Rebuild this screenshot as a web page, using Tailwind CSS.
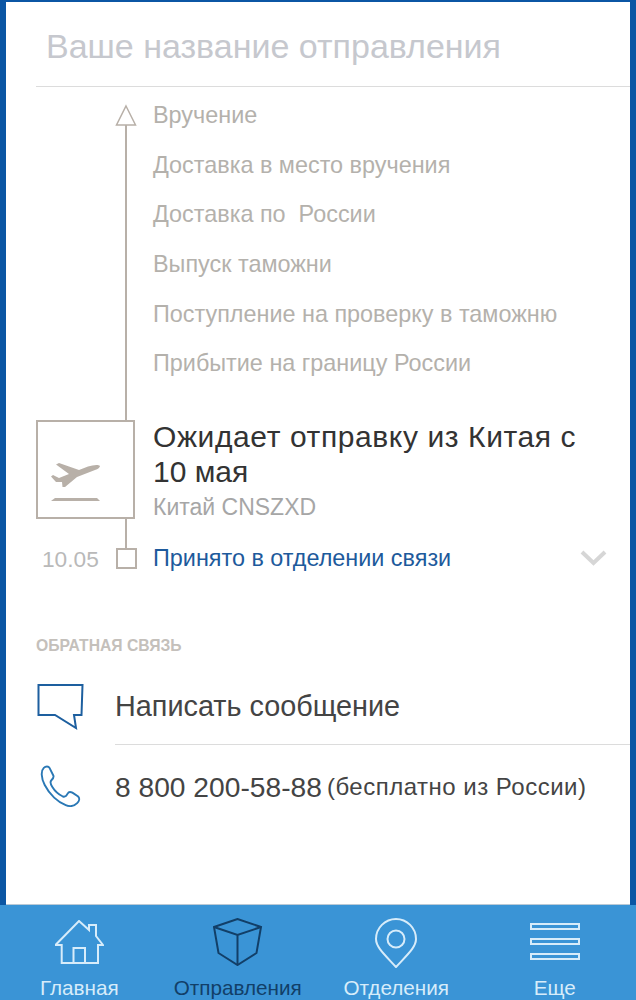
<!DOCTYPE html>
<html lang="en">
    <head>
        <meta charset="UTF-8" />
        <meta name="viewport" content="width=device-width, initial-scale=1.0" />
        <title>Отправление</title>
        <script src="https://cdn.jsdelivr.net/npm/@tailwindcss/browser@4"></script>
    </head>
    <body class="bg-white">
        <div class="w-[636px] h-[1000px] overflow-hidden flex flex-col bg-[#0b56a4] pt-[2px] font-['Liberation_Sans',sans-serif]">
            <!-- content -->
            <div class="mx-[6px] h-[903px] shrink-0 bg-white border-b border-[#b9c9d6] flex flex-col">
                <div class="ml-[30px] h-[85px] border-b border-[#dcdcdc] pl-[10px] pt-[22px] text-[34px] leading-[44px] text-[#c6c8ce]">Ваше название отправления</div>

                <!-- timeline -->
                <div class="relative ml-[30px] pt-[4px]">
                    <div class="absolute left-[89px] top-[38px] w-[2px] h-[434px] bg-[#b8b0a8]"></div>
                    <svg class="absolute left-[79px] top-[17px]" width="22" height="22" viewBox="0 0 22 22" fill="white" stroke="#b8b0a8" stroke-width="1.5"><path d="M11 2 L20.5 21 H1.5 Z" /></svg>

                    <ul class="pl-[117px] text-[23.4px] text-[#b4b1ac]">
                        <li class="h-[49.6px] flex items-center">Вручение</li>
                        <li class="h-[49.6px] flex items-center">Доставка в место вручения</li>
                        <li class="h-[49.6px] flex items-center whitespace-pre">Доставка по  России</li>
                        <li class="h-[49.6px] flex items-center">Выпуск таможни</li>
                        <li class="h-[49.6px] flex items-center">Поступление на проверку в таможню</li>
                        <li class="h-[49.6px] flex items-center">Прибытие на границу России</li>
                    </ul>

                    <!-- current step -->
                    <div class="relative flex h-[99px] mt-[31px]">
                        <div class="w-[99px] h-[99px] shrink-0 border-2 border-[#b8b0a8] bg-white pl-[13px] pt-[40px]">
                            <svg width="50" height="40" viewBox="0 0 50 40" fill="#b8b0a8">
                                <path d="M49 4 C47 2 42 3 37 4.5 L28 8 L8 1 L5 2.5 L18 12 L8 16 L2 13 L0 14.500 L5 20 L11 20 L11.500 25 L14 25 L26 15 L44 8 C47 7 49 5.500 49 4 Z" />
                                <path d="M4 36 H46 L49 39 H0 Z" />
                            </svg>
                        </div>
                        <div class="ml-[18px] w-[450px] -mt-[1px]">
                            <div class="text-[30px] leading-[35px] text-[#333333]">
                                <div class="tracking-[0.6px]">Ожидает отправку из Китая с</div>
                                <div>10 мая</div>
                            </div>
                            <div class="mt-[4px] text-[23px] leading-[28px] text-[#a6a6a6]">Китай CNSZXD</div>
                        </div>
                    </div>

                    <div class="relative flex items-center h-[40px] mt-[20px]">
                        <span class="w-[64px] pl-[6px] text-[22.7px] text-[#b9b9b9] shrink-0 whitespace-nowrap">10.05</span>
                        <span class="ml-[16px] w-[21px] h-[21px] border-[2.5px] border-[#b8b0a8] bg-white shrink-0"></span>
                        <span class="ml-[16px] text-[23.4px] text-[#1d5a9c]">Принято в отделении связи</span>
                        <svg class="absolute left-[544px] top-[10px]" width="27" height="17" viewBox="0 0 27 17" fill="none" stroke="#d6d6d6" stroke-width="4"><path d="M2 3 L13.500 14 L25 3" /></svg>
                    </div>
                </div>

                <!-- feedback -->
                <div class="ml-[30px] mt-[58px] text-[15.7px] leading-[18px] font-bold text-[#c4c0bb]">ОБРАТНАЯ СВЯЗЬ</div>
                <div class="ml-[30px] mt-[15px] flex">
                    <div class="w-[79px] shrink-0 pt-[14px]">
                        <svg width="48" height="46" viewBox="0 0 48 46" fill="none" stroke="#1d5f9f" stroke-width="2"><path d="M2.500 1 H46.500 L45.500 31 H38 L40 44 L19 31 H2.500 Z" /></svg>
                    </div>
                    <div class="flex-1 h-[75px] border-b border-[#dcdcdc] flex items-center text-[28.8px] text-[#444444]">Написать сообщение</div>
                </div>
                <div class="ml-[30px] flex">
                    <div class="w-[79px] shrink-0 pt-[20px] pl-[3px]">
                        <svg width="42" height="42" viewBox="0 0 44 44" fill="none" stroke="#2a78b5" stroke-width="2"><path d="M5 3 C7 1 10 1 11 3 L15 11 C16 13 15 14 13 16 C11 18 12 20 14 23 C17 28 21 31 25 33 C28 34 29 32 30 30 C31 28 33 28 35 29 L41 33 C43 35 42 38 40 40 C37 43 33 44 28 42 C20 39 11 31 6 21 C2 13 2 6 5 3 Z" /></svg>
                    </div>
                    <div class="h-[85px] flex items-center whitespace-nowrap text-[#444444]">
                        <span class="text-[28.2px]">8 800 200-58-88</span>
                        <span class="ml-[5px] text-[24px] tracking-[0.5px]">(бесплатно из России)</span>
                    </div>
                </div>
            </div>

            <!-- tab bar -->
            <nav class="flex-1 bg-[#3a94d6] grid grid-cols-4 pr-[2px] text-[20.7px] text-[#d7ecfa]">
                <a class="flex flex-col items-center pt-[15px]">
                    <svg width="49" height="46" viewBox="0 0 49 46" fill="none" stroke="#d7ecfa" stroke-width="2"><path d="M0.500 25 L24 1 L34 10 V5 H41 V16 L48 25 H43 V43 H6.700 V25 Z" /><path d="M18.500 43 V28 H30 V43" /></svg>
                    <span class="leading-[24px] mt-[10px]">Главная</span>
                </a>
                <a class="flex flex-col items-center pt-[13px] text-[#123f68]">
                    <svg width="50" height="48" viewBox="0 0 50 48" fill="none" stroke="#123f68" stroke-width="2"><path d="M1 9 L24.500 1 L48 9 L43.500 35 L24.500 47 L5.500 35 Z" /><path d="M1 9 L24.500 17 L48 9 M24.500 17 V47" /></svg>
                    <span class="leading-[24px] mt-[10px]">Отправления</span>
                </a>
                <a class="flex flex-col items-center pt-[13px]">
                    <svg width="44" height="50" viewBox="0 0 44 50" fill="none" stroke="#d7ecfa" stroke-width="2"><path d="M22 49 C10 36 2 29 2 21 C2 10 11 1 22 1 C33 1 42 10 42 21 C42 29 34 36 22 49 Z" /><circle cx="22" cy="21" r="8.500" /></svg>
                    <span class="leading-[24px] mt-[8px]">Отделения</span>
                </a>
                <a class="flex flex-col items-center pt-[18px]">
                    <div class="h-[43px] w-[50px] flex flex-col gap-[8px]">
                        <div class="h-[7px] border-2 border-[#d7ecfa]"></div>
                        <div class="h-[7px] border-2 border-[#d7ecfa]"></div>
                        <div class="h-[7px] border-2 border-[#d7ecfa]"></div>
                    </div>
                    <span class="leading-[24px] mt-[10px]">Еще</span>
                </a>
            </nav>
        </div>
    </body>
</html>
